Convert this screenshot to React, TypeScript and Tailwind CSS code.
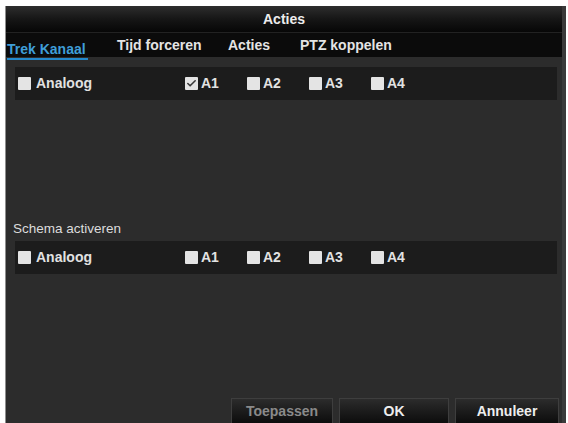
import { Check } from "lucide-react";

const font = { fontFamily: '"Liberation Sans", Arial, sans-serif' };

function Box({ checked = false }: { checked?: boolean }) {
  return (
    <span className="w-[13px] h-[13px] bg-[#e4e4e4] rounded-[1px] flex items-center justify-center shrink-0">
      {checked && <Check size={11} strokeWidth={3.5} className="text-[#3a3a3a]" />}
    </span>
  );
}

function ChannelRow({ firstChecked = false }: { firstChecked?: boolean }) {
  const items = ["A1", "A2", "A3", "A4"];
  return (
    <div className="h-[33px] bg-[#1c1c1c] flex items-center pl-[3px]">
      <div className="w-[167px] flex items-center gap-[5px]">
        <Box />
        <span className="text-[14px] font-bold text-[#e2e2e2]">Analoog</span>
      </div>
      {items.map((name, i) => (
        <div key={name} className="w-[62px] flex items-center gap-[3px]">
          <Box checked={firstChecked && i === 0} />
          <span className="text-[14px] font-bold text-[#e2e2e2]">{name}</span>
        </div>
      ))}
    </div>
  );
}

export default function App() {
  return (
    <div className="w-[568px] h-[423px] bg-white pt-[6px] pl-[5px] pr-[2px] flex flex-col overflow-hidden" style={font}>
      <div className="flex-1 flex flex-col bg-[#2c2c2c] border-l border-[#8e8e8e] border-r-[4px] border-r-[#3a3a3a]">
        {/* title */}
        <div className="h-[26px] shrink-0 flex items-center justify-center bg-gradient-to-b from-[#2e2e2e] via-[#161616] to-[#070707]">
          <span className="text-[14px] font-bold text-[#ececec]">Acties</span>
        </div>

        {/* tabs */}
        <div className="h-[25px] shrink-0 flex items-start bg-[#0b0b0b] border-t border-[#222]">
          <div className="w-[111px] pl-[1px] pt-[4px]">
            <span className="inline-block text-[14px] font-bold text-[#3f9ed8] border-b-2 border-[#2489cc] leading-[16px] pb-[1px] pr-[2px]">
              Trek Kanaal
            </span>
          </div>
          <div className="w-[111px] pt-[4px] text-[14px] font-bold text-[#e4e4e4] leading-[16px]">Tijd forceren</div>
          <div className="w-[72px] pt-[4px] text-[14px] font-bold text-[#e4e4e4] leading-[16px]">Acties</div>
          <div className="pt-[4px] text-[14px] font-bold text-[#e4e4e4] leading-[16px]">PTZ koppelen</div>
        </div>

        {/* body */}
        <div className="flex-1 flex flex-col pl-[9px] pr-[5px] pt-[10px]">
          <ChannelRow firstChecked />
          <div className="mt-[120px] h-[17px] text-[13.5px] text-[#dcdcdc] leading-[17px] -ml-[2px]">Schema activeren</div>
          <div className="mt-[4px]">
            <ChannelRow />
          </div>

          <div className="mt-auto flex justify-end gap-[6px] pr-[0px] -mr-[2px]">
            {[
              { label: "Toepassen", w: "w-[102px]", color: "text-[#8a8a8a]" },
              { label: "OK", w: "w-[110px]", color: "text-[#eeeeee]" },
              { label: "Annuleer", w: "w-[104px]", color: "text-[#eeeeee]" },
            ].map((b) => (
              <button
                key={b.label}
                className={`${b.w} h-[25px] bg-gradient-to-b from-[#2c2c2c] to-[#0d0d0d] border border-[#3e3e3e] border-b-0 text-[14px] font-bold ${b.color}`}
              >
                {b.label}
              </button>
            ))}
          </div>
        </div>
      </div>
    </div>
  );
}
